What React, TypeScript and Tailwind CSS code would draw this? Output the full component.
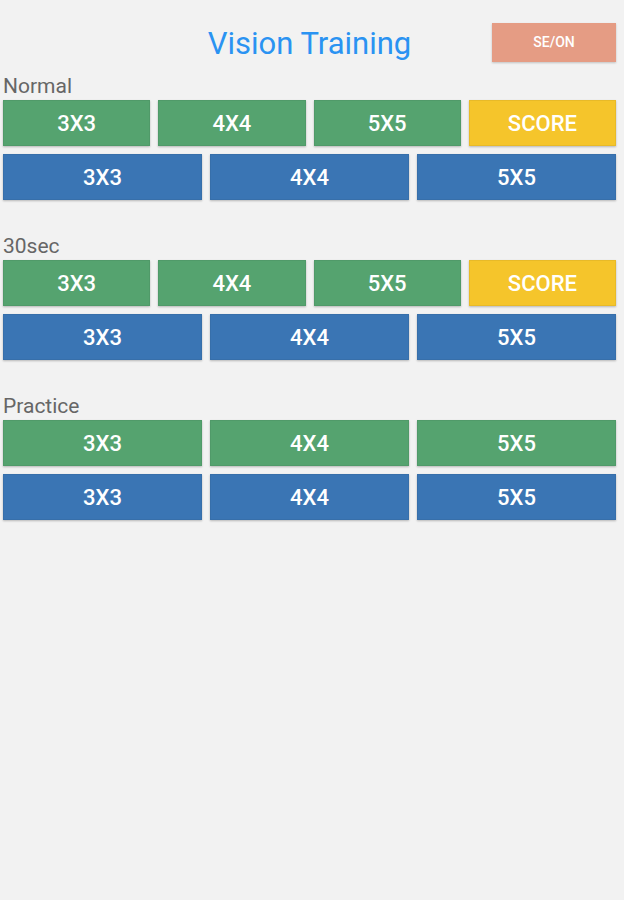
import React from 'react';

const green = 'bg-[#55a36f]';
const blue = 'bg-[#3a75b4]';
const yellow = 'bg-[#f5c52b]';

const Tile = ({ label, color }: { label: string; color: string }) => (
  <button
    className={`h-[46px] ${color} text-white text-[22px] font-medium shadow-[0_1px_2px_rgba(0,0,0,0.25)] border border-black/5`}
  >
    {label}
  </button>
);

const Section = ({ title, score }: { title: string; score: boolean }) => (
  <section>
    <div className="h-[22px] leading-[22px] text-[21px] text-[#666666] mb-[3px]">{title}</div>
    <div className="flex flex-col gap-2">
      {score ? (
        <div className="grid grid-cols-4 gap-2">
          <Tile label="3X3" color={green} />
          <Tile label="4X4" color={green} />
          <Tile label="5X5" color={green} />
          <Tile label="SCORE" color={yellow} />
        </div>
      ) : (
        <div className="grid grid-cols-3 gap-2">
          <Tile label="3X3" color={green} />
          <Tile label="4X4" color={green} />
          <Tile label="5X5" color={green} />
        </div>
      )}
      <div className="grid grid-cols-3 gap-2">
        <Tile label="3X3" color={blue} />
        <Tile label="4X4" color={blue} />
        <Tile label="5X5" color={blue} />
      </div>
    </div>
  </section>
);

export default function App() {
  return (
    <div
      className="min-h-[900px] bg-[#f2f2f2] pl-[3px] pr-[8px] pt-[23px]"
      style={{ fontFamily: 'Roboto, "Noto Sans", sans-serif' }}
    >
      {/* Header */}
      <header className="grid grid-cols-[1fr_auto_1fr] items-center h-[39px]">
        <div />
        <h1 className="text-[31px] text-[#2a93f2] leading-none pt-[2px]">Vision Training</h1>
        <div className="flex justify-end">
          <button className="w-[124px] h-[39px] bg-[#e59c84] text-white text-[14px] font-medium shadow-[0_1px_2px_rgba(0,0,0,0.2)]">
            SE/ON
          </button>
        </div>
      </header>

      <div className="mt-[13px] flex flex-col gap-[35px]">
        <Section title="Normal" score />
        <Section title="30sec" score />
        <Section title="Practice" score={false} />
      </div>
    </div>
  );
}
